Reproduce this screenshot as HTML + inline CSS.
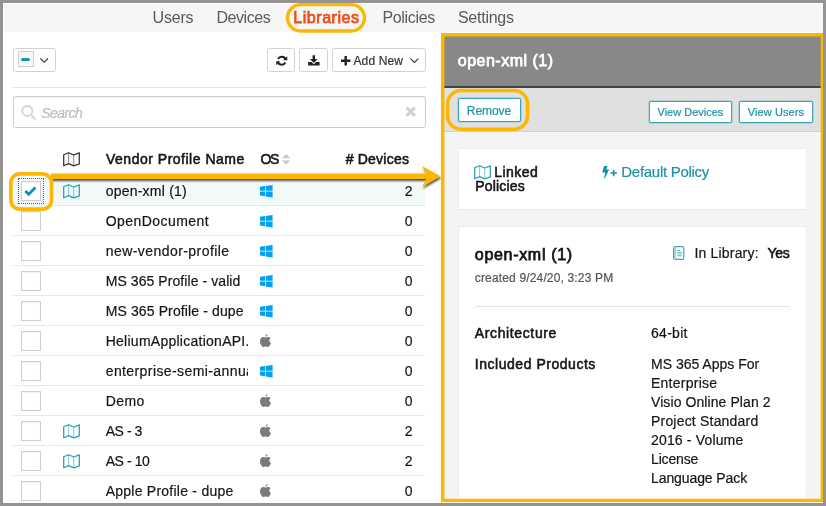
<!DOCTYPE html>
<html lang="en">
<head>
<meta charset="utf-8">
<title>Libraries</title>
<style>
html,body{margin:0;padding:0;}
body{width:826px;height:506px;position:relative;overflow:hidden;background:#959391;font-family:"Liberation Sans",sans-serif;}
.a{position:absolute;box-sizing:border-box;}
.t{position:absolute;white-space:nowrap;}
#page{left:3px;top:3px;width:820px;height:500px;background:#fff;}
#nav{left:3px;top:3px;width:820px;height:29px;background:#f6f6f6;border-top:1px solid #fff;border-left:1px solid #fff;}
.btn{background:#fff;border:1px solid #d2d2d2;border-radius:2.5px;}
.hl{border:4px solid #fbb703;border-radius:11px;}
.line{height:1px;background:#e7e7e7;left:13px;width:412px;}
.cb{left:21px;width:20px;height:20px;border:1px solid #cfcfcf;background:#fff;box-shadow:inset 0 1px 1px rgba(0,0,0,.06);}
.card{background:#fff;border:1px solid #ececec;}
.tbtn{background:#fff;border:1px solid #3aa7b6;border-radius:2px;box-shadow:0 0 0 1px rgba(58,167,182,.25);}
svg{position:absolute;overflow:visible;}
</style>
</head>
<body>
<div class="a" id="page"></div>
<div class="a" id="nav"></div>
<!-- Libraries pill -->
<svg style="left:0;top:0" width="826" height="40" viewBox="0 0 826 40"><rect x="287.5" y="4.6" width="77" height="26.4" rx="13.2" fill="#f6f6f6" stroke="#fbb703" stroke-width="3.4"/></svg>

<!-- left toolbar -->
<div class="a btn" style="left:13px;top:48px;width:43px;height:24px;"></div>
<div class="a" style="left:18px;top:51px;width:16px;height:16px;border:1px solid #d0d0d0;background:#f8f8f8;"></div>
<div class="a" style="left:20.7px;top:58px;width:9.7px;height:3px;background:#1697a9;border-radius:1.5px;"></div>
<svg style="left:40px;top:58.4px" width="8.4" height="5" viewBox="0 0 8.4 5"><path d="M0.4 0.5 L4.2 4.3 L8 0.5" fill="none" stroke="#333" stroke-width="1.1"/></svg>

<div class="a btn" style="left:267px;top:48px;width:28px;height:24px;"></div>
<svg style="left:275.5px;top:55px" width="11.5" height="11.5" viewBox="0 0 24 24"><g fill="none" stroke="#222" stroke-width="4"><path d="M20.5 9.5 A9 9 0 0 0 4.2 8.2"/><path d="M3.5 14.5 A9 9 0 0 0 19.8 15.8"/></g><path d="M23.5 2.5 V11 H15 Z" fill="#222"/><path d="M0.5 21.5 V13 H9 Z" fill="#222"/></svg>
<div class="a btn" style="left:299px;top:48px;width:29px;height:24px;"></div>
<svg style="left:307.5px;top:54.5px" width="12" height="11" viewBox="0 0 12 11"><path d="M4.6 0.2 H7 V3.9 H9.6 L5.8 8 L2 3.9 H4.6 Z" fill="#222"/><path d="M0.1 7 H3.4 L5.8 9.3 L8.2 7 H11.6 V10.5 H0.1 Z" fill="#222"/></svg>
<div class="a btn" style="left:332px;top:48px;width:94px;height:24px;"></div>
<svg style="left:340.5px;top:55.7px" width="9.4" height="9.4" viewBox="0 0 10 10"><path d="M3.7 0 H6.3 V3.7 H10 V6.3 H6.3 V10 H3.7 V6.3 H0 V3.7 H3.7 Z" fill="#222"/></svg>
<svg style="left:409.8px;top:58.3px" width="9" height="6" viewBox="0 0 9 6"><path d="M0.5 0.6 L4.4 4.5 L8.3 0.6" fill="none" stroke="#333" stroke-width="1.1"/></svg>

<div class="a" style="left:13px;top:87px;width:413px;height:1px;background:#e2e2e2;"></div>
<!-- search -->
<div class="a" style="left:13px;top:96px;width:413px;height:32px;border:1px solid #ccc;border-radius:2.5px;background:#fff;box-shadow:inset 0 1px 1px rgba(0,0,0,.05);"></div>
<svg style="left:20px;top:103.5px" width="17" height="17" viewBox="0 0 17 17"><circle cx="7.3" cy="7.1" r="5.1" fill="none" stroke="#d6d6d6" stroke-width="1.8"/><path d="M11 10.9 L15 15" stroke="#d6d6d6" stroke-width="2" stroke-linecap="round"/></svg>
<svg style="left:405.3px;top:106.3px" width="11.4" height="11.4" viewBox="0 0 11 11"><path d="M1.5 1.5 L9.5 9.5 M9.5 1.5 L1.5 9.5" stroke="#d2d2d2" stroke-width="3" stroke-linecap="butt"/></svg>

<!-- table header icons -->
<svg style="left:63px;top:151.5px" width="17" height="14.5" viewBox="0 0 17 14.5"><path d="M0.7 2.8 L5.6 0.7 L10.7 3 L16.3 0.8 V11.9 L10.7 13.9 L5.6 11.6 L0.7 13.8 Z" fill="none" stroke="#333" stroke-width="1.25" stroke-linejoin="round"/><path d="M5.6 0.7 V11.6 M10.7 3 V13.9" stroke="#333" stroke-width="0.75" opacity="0.75"/></svg>
<svg style="left:281.8px;top:153.8px" width="8.4" height="10.6" viewBox="0 0 8.4 10.6"><path d="M4.2 0 L8.4 4.2 H0 Z M0 6.4 H8.4 L4.2 10.6 Z" fill="#c8c8c8"/></svg>

<!-- rows -->
<div class="a" style="left:13px;top:175px;width:412px;height:30px;background:#f2f9f9;"></div>
<div class="a line" style="top:205px"></div>
<svg style="left:63px;top:183.8px" width="17" height="14.5" viewBox="0 0 17 14.5"><path d="M0.7 2.8 L5.6 0.7 L10.7 3 L16.3 0.8 V11.9 L10.7 13.9 L5.6 11.6 L0.7 13.8 Z" fill="none" stroke="#2a9fb0" stroke-width="1.25" stroke-linejoin="round"/><path d="M5.6 0.7 V11.6 M10.7 3 V13.9" stroke="#2a9fb0" stroke-width="0.75" opacity="0.75"/></svg>
<svg style="left:259.8px;top:184.6px" width="12.6" height="12.4" viewBox="0 0 13 13" preserveAspectRatio="none"><path d="M0 1.8 L5.3 1.05 V6.1 H0 Z M5.95 0.95 L13 0 V6.1 H5.95 Z M0 6.75 H5.3 V11.85 L0 11.1 Z M5.95 6.75 H13 V13 L5.95 12 Z" fill="#00a1f1"/></svg>
<div class="a line" style="top:235px"></div>
<div class="a cb" style="top:211px"></div>
<svg style="left:259.8px;top:214.6px" width="12.6" height="12.4" viewBox="0 0 13 13" preserveAspectRatio="none"><path d="M0 1.8 L5.3 1.05 V6.1 H0 Z M5.95 0.95 L13 0 V6.1 H5.95 Z M0 6.75 H5.3 V11.85 L0 11.1 Z M5.95 6.75 H13 V13 L5.95 12 Z" fill="#00a1f1"/></svg>
<div class="a line" style="top:265px"></div>
<div class="a cb" style="top:241px"></div>
<svg style="left:259.8px;top:244.6px" width="12.6" height="12.4" viewBox="0 0 13 13" preserveAspectRatio="none"><path d="M0 1.8 L5.3 1.05 V6.1 H0 Z M5.95 0.95 L13 0 V6.1 H5.95 Z M0 6.75 H5.3 V11.85 L0 11.1 Z M5.95 6.75 H13 V13 L5.95 12 Z" fill="#00a1f1"/></svg>
<div class="a line" style="top:295px"></div>
<div class="a cb" style="top:271px"></div>
<svg style="left:259.8px;top:274.6px" width="12.6" height="12.4" viewBox="0 0 13 13" preserveAspectRatio="none"><path d="M0 1.8 L5.3 1.05 V6.1 H0 Z M5.95 0.95 L13 0 V6.1 H5.95 Z M0 6.75 H5.3 V11.85 L0 11.1 Z M5.95 6.75 H13 V13 L5.95 12 Z" fill="#00a1f1"/></svg>
<div class="a line" style="top:325px"></div>
<div class="a cb" style="top:301px"></div>
<svg style="left:259.8px;top:304.6px" width="12.6" height="12.4" viewBox="0 0 13 13" preserveAspectRatio="none"><path d="M0 1.8 L5.3 1.05 V6.1 H0 Z M5.95 0.95 L13 0 V6.1 H5.95 Z M0 6.75 H5.3 V11.85 L0 11.1 Z M5.95 6.75 H13 V13 L5.95 12 Z" fill="#00a1f1"/></svg>
<div class="a line" style="top:355px"></div>
<div class="a cb" style="top:331px"></div>
<svg style="left:260.1px;top:334px" width="11" height="13" viewBox="0 0 11 13"><path d="M7.6 0 C7.7 0.9 7.1 2 5.6 2.9 C5.4 1.6 6.4 0.4 7.6 0 Z M5.6 3.6 C6.3 3.6 7 3 8.1 3 C9.1 3 10 3.5 10.6 4.3 C8.7 5.4 9 8.2 11 9 C10.5 10.4 9.3 13 7.9 13 C7 13 6.6 12.5 5.6 12.5 C4.6 12.5 4.2 13 3.4 13 C1.9 13 0 9.9 0 7.3 C0 4.6 1.7 3.1 3.3 3.1 C4.3 3.1 5 3.6 5.6 3.6 Z" fill="#7b7b7b"/></svg>
<div class="a line" style="top:385px"></div>
<div class="a cb" style="top:361px"></div>
<svg style="left:259.8px;top:364.6px" width="12.6" height="12.4" viewBox="0 0 13 13" preserveAspectRatio="none"><path d="M0 1.8 L5.3 1.05 V6.1 H0 Z M5.95 0.95 L13 0 V6.1 H5.95 Z M0 6.75 H5.3 V11.85 L0 11.1 Z M5.95 6.75 H13 V13 L5.95 12 Z" fill="#00a1f1"/></svg>
<div class="a line" style="top:415px"></div>
<div class="a cb" style="top:391px"></div>
<svg style="left:260.1px;top:394px" width="11" height="13" viewBox="0 0 11 13"><path d="M7.6 0 C7.7 0.9 7.1 2 5.6 2.9 C5.4 1.6 6.4 0.4 7.6 0 Z M5.6 3.6 C6.3 3.6 7 3 8.1 3 C9.1 3 10 3.5 10.6 4.3 C8.7 5.4 9 8.2 11 9 C10.5 10.4 9.3 13 7.9 13 C7 13 6.6 12.5 5.6 12.5 C4.6 12.5 4.2 13 3.4 13 C1.9 13 0 9.9 0 7.3 C0 4.6 1.7 3.1 3.3 3.1 C4.3 3.1 5 3.6 5.6 3.6 Z" fill="#7b7b7b"/></svg>
<div class="a line" style="top:445px"></div>
<div class="a cb" style="top:421px"></div>
<svg style="left:63px;top:423.8px" width="17" height="14.5" viewBox="0 0 17 14.5"><path d="M0.7 2.8 L5.6 0.7 L10.7 3 L16.3 0.8 V11.9 L10.7 13.9 L5.6 11.6 L0.7 13.8 Z" fill="none" stroke="#2a9fb0" stroke-width="1.25" stroke-linejoin="round"/><path d="M5.6 0.7 V11.6 M10.7 3 V13.9" stroke="#2a9fb0" stroke-width="0.75" opacity="0.75"/></svg>
<svg style="left:260.1px;top:424px" width="11" height="13" viewBox="0 0 11 13"><path d="M7.6 0 C7.7 0.9 7.1 2 5.6 2.9 C5.4 1.6 6.4 0.4 7.6 0 Z M5.6 3.6 C6.3 3.6 7 3 8.1 3 C9.1 3 10 3.5 10.6 4.3 C8.7 5.4 9 8.2 11 9 C10.5 10.4 9.3 13 7.9 13 C7 13 6.6 12.5 5.6 12.5 C4.6 12.5 4.2 13 3.4 13 C1.9 13 0 9.9 0 7.3 C0 4.6 1.7 3.1 3.3 3.1 C4.3 3.1 5 3.6 5.6 3.6 Z" fill="#7b7b7b"/></svg>
<div class="a line" style="top:475px"></div>
<div class="a cb" style="top:451px"></div>
<svg style="left:63px;top:453.8px" width="17" height="14.5" viewBox="0 0 17 14.5"><path d="M0.7 2.8 L5.6 0.7 L10.7 3 L16.3 0.8 V11.9 L10.7 13.9 L5.6 11.6 L0.7 13.8 Z" fill="none" stroke="#2a9fb0" stroke-width="1.25" stroke-linejoin="round"/><path d="M5.6 0.7 V11.6 M10.7 3 V13.9" stroke="#2a9fb0" stroke-width="0.75" opacity="0.75"/></svg>
<svg style="left:260.1px;top:454px" width="11" height="13" viewBox="0 0 11 13"><path d="M7.6 0 C7.7 0.9 7.1 2 5.6 2.9 C5.4 1.6 6.4 0.4 7.6 0 Z M5.6 3.6 C6.3 3.6 7 3 8.1 3 C9.1 3 10 3.5 10.6 4.3 C8.7 5.4 9 8.2 11 9 C10.5 10.4 9.3 13 7.9 13 C7 13 6.6 12.5 5.6 12.5 C4.6 12.5 4.2 13 3.4 13 C1.9 13 0 9.9 0 7.3 C0 4.6 1.7 3.1 3.3 3.1 C4.3 3.1 5 3.6 5.6 3.6 Z" fill="#7b7b7b"/></svg>
<div class="a line" style="top:505px"></div>
<div class="a cb" style="top:481px"></div>
<svg style="left:260.1px;top:484px" width="11" height="13" viewBox="0 0 11 13"><path d="M7.6 0 C7.7 0.9 7.1 2 5.6 2.9 C5.4 1.6 6.4 0.4 7.6 0 Z M5.6 3.6 C6.3 3.6 7 3 8.1 3 C9.1 3 10 3.5 10.6 4.3 C8.7 5.4 9 8.2 11 9 C10.5 10.4 9.3 13 7.9 13 C7 13 6.6 12.5 5.6 12.5 C4.6 12.5 4.2 13 3.4 13 C1.9 13 0 9.9 0 7.3 C0 4.6 1.7 3.1 3.3 3.1 C4.3 3.1 5 3.6 5.6 3.6 Z" fill="#7b7b7b"/></svg>

<!-- highlight on checkbox + arrow -->
<svg style="left:0;top:0" width="826" height="506" viewBox="0 0 826 506">
 <defs><filter id="sh" x="-5%" y="-50%" width="110%" height="200%"><feDropShadow dx="0.8" dy="1.9" stdDeviation="0.9" flood-color="#000" flood-opacity="0.72"/></filter></defs>
 <g filter="url(#sh)"><path d="M51 173.6 H426.6 L421.9 166.1 L440.4 176.3 L421.9 187.1 L426.6 179 H51 Z" fill="#fbb703"/></g>
</svg>
<svg style="left:0;top:160px" width="70" height="60" viewBox="0 160 70 60"><rect x="10.85" y="173.85" width="40.7" height="35.3" rx="9" fill="#f2f9f9" stroke="#fbb703" stroke-width="3.7"/></svg>
<div class="a" style="left:18px;top:178px;width:26px;height:26px;border:1px dotted #666;"></div>
<div class="a cb" style="top:181px;"></div>
<svg style="left:24.1px;top:186.3px" width="12.5" height="10" viewBox="0 0 12.5 10"><path d="M1.3 5 L4.7 8.3 L11.4 1.5" fill="none" stroke="#0e94a7" stroke-width="2.8"/></svg>

<!-- right panel -->
<div class="a" style="left:441px;top:33px;width:382px;height:469px;background:#f4f4f4;"></div>
<div class="a" style="left:444px;top:36px;width:377px;height:51.5px;background:#888;border-bottom:2px solid #444;"></div>
<div class="a" style="left:444px;top:87.5px;width:377px;height:44px;background:#e0e0e0;border-bottom:1px solid #d0d0d0;"></div>
<div class="a tbtn" style="left:458px;top:98px;width:63px;height:24px;"></div>
<div class="a tbtn" style="left:648.5px;top:101px;width:83.5px;height:21.5px;"></div>
<div class="a tbtn" style="left:739px;top:101px;width:73.5px;height:21.5px;"></div>
<svg style="left:440px;top:80px" width="100" height="60" viewBox="440 80 100 60"><rect x="447.6" y="90.5" width="80" height="38.7" rx="13.5" fill="none" stroke="#fbb703" stroke-width="3.6"/></svg>

<div class="a card" style="left:458px;top:148px;width:348.5px;height:61.5px;"></div>
<div class="a card" style="left:458px;top:226px;width:348.5px;height:290px;"></div>
<svg style="left:474px;top:165.1px" width="17" height="14.5" viewBox="0 0 17 14.5"><path d="M0.7 2.8 L5.6 0.7 L10.7 3 L16.3 0.8 V11.9 L10.7 13.9 L5.6 11.6 L0.7 13.8 Z" fill="none" stroke="#2a9fb0" stroke-width="1.25" stroke-linejoin="round"/><path d="M5.6 0.7 V11.6 M10.7 3 V13.9" stroke="#2a9fb0" stroke-width="0.75" opacity="0.75"/></svg>
<svg style="left:602px;top:166px" width="15.2" height="12.8" viewBox="0 0 15.2 12.8"><path d="M2 0 H5.4 L4.5 3.4 H7.2 L2.6 12.8 H2 L3.3 6.6 H0.2 Z" fill="#0e94a7"/><path d="M10.9 3.8 H12.5 V6.2 H14.9 V7.8 H12.5 V10.2 H10.9 V7.8 H8.5 V6.2 H10.9 Z" fill="#0e94a7"/></svg>
<!-- book icon -->
<svg style="left:673px;top:246px" width="11.4" height="14" viewBox="0 0 11.4 14"><rect x="0.6" y="0.6" width="10.2" height="12.8" rx="1.6" fill="#fff" stroke="#3aaab9" stroke-width="1.2"/><rect x="1" y="1" width="2.2" height="12" fill="#9fd5dc"/><path d="M4.4 4.4 H7 M4.4 6.3 H8.8 M4.4 8 H8.8 M4.4 9.8 H8.8" stroke="#55b7c4" stroke-width="1"/></svg>
<div class="a" style="left:475px;top:306px;width:315px;height:1px;background:#e3e3e3;"></div>

<!-- orange frame -->
<svg style="left:0;top:0" width="826" height="506" viewBox="0 0 826 506"><path fill-rule="evenodd" fill="#fbb703" d="M440.9 33 H823.2 V502 H440.9 Z M444.4 36.4 V498.7 H820.7 V36.4 Z"/></svg>
<div class="a" style="left:441px;top:502px;width:382px;height:1px;background:#fff8e0;"></div>
<!-- outer frame repaint -->
<div class="a" style="left:0;top:503px;width:826px;height:3px;background:#959391;"></div>
<div class="a" style="left:823px;top:0;width:3px;height:506px;background:#959391;"></div>

<div class="a" style="left:0;top:0;width:826px;height:506px;will-change:transform;">
<span class="t" style="top:9px;font-size:16px;line-height:17px;color:#5a5a5a;left:152.60px;letter-spacing:-0.216px;">Users</span>
<span class="t" style="top:9px;font-size:16px;line-height:17px;color:#5a5a5a;left:216.50px;letter-spacing:-0.444px;">Devices</span>
<span class="t" style="top:9px;font-size:16px;line-height:17px;color:#f24e1a;left:293.30px;-webkit-text-stroke:0.75px;letter-spacing:0.538px;">Libraries</span>
<span class="t" style="top:9px;font-size:16px;line-height:17px;color:#5a5a5a;left:382.40px;letter-spacing:-0.318px;">Policies</span>
<span class="t" style="top:9px;font-size:16px;line-height:17px;color:#5a5a5a;left:457.90px;letter-spacing:-0.239px;">Settings</span>
<span class="t" style="top:54px;font-size:12px;line-height:14px;color:#333;left:353.40px;-webkit-text-stroke:0.2px;letter-spacing:0.157px;">Add New</span>
<span class="t" style="top:105px;font-size:14px;line-height:16px;color:#bdbdbd;left:41.30px;-webkit-text-stroke:0.2px;font-style:italic;letter-spacing:-0.577px;">Search</span>
<span class="t" style="top:151px;font-size:14px;line-height:16px;color:#151515;left:106.00px;-webkit-text-stroke:0.55px;letter-spacing:0.506px;">Vendor Profile Name</span>
<span class="t" style="top:151px;font-size:14px;line-height:16px;color:#151515;left:260.50px;-webkit-text-stroke:0.55px;letter-spacing:-1.467px;">OS</span>
<span class="t" style="top:151px;font-size:14px;line-height:16px;color:#151515;left:345.70px;-webkit-text-stroke:0.55px;letter-spacing:0.215px;"># Devices</span>
<span class="t" style="top:183px;font-size:14px;line-height:16px;color:#151515;left:105.70px;-webkit-text-stroke:0.2px;letter-spacing:0.226px;">open-xml (1)</span>
<span class="t" style="top:183px;font-size:14px;line-height:16px;color:#151515;right:413.50px;-webkit-text-stroke:0.2px;">2</span>
<span class="t" style="top:213px;font-size:14px;line-height:16px;color:#151515;left:105.70px;-webkit-text-stroke:0.2px;letter-spacing:0.445px;">OpenDocument</span>
<span class="t" style="top:213px;font-size:14px;line-height:16px;color:#151515;right:413.50px;-webkit-text-stroke:0.2px;">0</span>
<span class="t" style="top:243px;font-size:14px;line-height:16px;color:#151515;left:105.70px;-webkit-text-stroke:0.2px;letter-spacing:0.441px;">new-vendor-profile</span>
<span class="t" style="top:243px;font-size:14px;line-height:16px;color:#151515;right:413.50px;-webkit-text-stroke:0.2px;">0</span>
<span class="t" style="top:273px;font-size:14px;line-height:16px;color:#151515;left:105.70px;-webkit-text-stroke:0.2px;letter-spacing:0.074px;">MS 365 Profile - valid</span>
<span class="t" style="top:273px;font-size:14px;line-height:16px;color:#151515;right:413.50px;-webkit-text-stroke:0.2px;">0</span>
<span class="t" style="top:303px;font-size:14px;line-height:16px;color:#151515;left:105.70px;-webkit-text-stroke:0.2px;letter-spacing:0.119px;">MS 365 Profile - dupe</span>
<span class="t" style="top:303px;font-size:14px;line-height:16px;color:#151515;right:413.50px;-webkit-text-stroke:0.2px;">0</span>
<span class="t" style="top:333px;font-size:14px;line-height:16px;color:#151515;left:105.70px;-webkit-text-stroke:0.2px;letter-spacing:0.259px;width:142.6px;overflow:hidden;">HeliumApplicationAPI.</span>
<span class="t" style="top:333px;font-size:14px;line-height:16px;color:#151515;right:413.50px;-webkit-text-stroke:0.2px;">0</span>
<span class="t" style="top:363px;font-size:14px;line-height:16px;color:#151515;left:105.70px;-webkit-text-stroke:0.2px;letter-spacing:0.405px;width:142.6px;overflow:hidden;">enterprise-semi-annua</span>
<span class="t" style="top:363px;font-size:14px;line-height:16px;color:#151515;right:413.50px;-webkit-text-stroke:0.2px;">0</span>
<span class="t" style="top:393px;font-size:14px;line-height:16px;color:#151515;left:105.70px;-webkit-text-stroke:0.2px;letter-spacing:0.410px;">Demo</span>
<span class="t" style="top:393px;font-size:14px;line-height:16px;color:#151515;right:413.50px;-webkit-text-stroke:0.2px;">0</span>
<span class="t" style="top:423px;font-size:14px;line-height:16px;color:#151515;left:105.70px;-webkit-text-stroke:0.2px;letter-spacing:-0.451px;">AS - 3</span>
<span class="t" style="top:423px;font-size:14px;line-height:16px;color:#151515;right:413.50px;-webkit-text-stroke:0.2px;">2</span>
<span class="t" style="top:453px;font-size:14px;line-height:16px;color:#151515;left:105.70px;-webkit-text-stroke:0.2px;letter-spacing:-0.429px;">AS - 10</span>
<span class="t" style="top:453px;font-size:14px;line-height:16px;color:#151515;right:413.50px;-webkit-text-stroke:0.2px;">2</span>
<span class="t" style="top:483px;font-size:14px;line-height:16px;color:#151515;left:105.70px;-webkit-text-stroke:0.2px;letter-spacing:0.242px;">Apple Profile - dupe</span>
<span class="t" style="top:483px;font-size:14px;line-height:16px;color:#151515;right:413.50px;-webkit-text-stroke:0.2px;">0</span>
<span class="t" style="top:52px;font-size:16px;line-height:17px;color:#fff;left:457.80px;-webkit-text-stroke:0.75px;letter-spacing:0.491px;">open-xml (1)</span>
<span class="t" style="top:104px;font-size:12px;line-height:14px;color:#1b93a6;left:466.80px;-webkit-text-stroke:0.2px;letter-spacing:-0.081px;">Remove</span>
<span class="t" style="top:106px;font-size:11px;line-height:12px;color:#1b93a6;left:657.50px;-webkit-text-stroke:0.2px;">View Devices</span>
<span class="t" style="top:106px;font-size:11px;line-height:12px;color:#1b93a6;left:747.80px;-webkit-text-stroke:0.2px;letter-spacing:0.076px;">View Users</span>
<span class="t" style="top:164px;font-size:14px;line-height:16px;color:#151515;left:494.20px;-webkit-text-stroke:0.55px;letter-spacing:0.456px;">Linked</span>
<span class="t" style="top:178px;font-size:14px;line-height:16px;color:#151515;left:475.30px;-webkit-text-stroke:0.55px;letter-spacing:0.181px;">Policies</span>
<span class="t" style="top:163px;font-size:15px;line-height:17px;color:#1b93a6;left:621.30px;-webkit-text-stroke:0.2px;letter-spacing:-0.287px;">Default Policy</span>
<span class="t" style="top:246px;font-size:16px;line-height:17px;color:#151515;left:474.80px;-webkit-text-stroke:0.75px;letter-spacing:0.691px;">open-xml (1)</span>
<span class="t" style="top:271px;font-size:12px;line-height:14px;color:#555;left:474.80px;-webkit-text-stroke:0.2px;letter-spacing:0.156px;">created 9/24/20, 3:23 PM</span>
<span class="t" style="top:245px;font-size:14px;line-height:16px;color:#151515;left:694.50px;-webkit-text-stroke:0.2px;letter-spacing:0.177px;">In Library:</span>
<span class="t" style="top:245px;font-size:14px;line-height:16px;color:#151515;left:767.60px;-webkit-text-stroke:0.55px;letter-spacing:-0.348px;">Yes</span>
<span class="t" style="top:325px;font-size:14px;line-height:16px;color:#151515;left:474.80px;-webkit-text-stroke:0.55px;letter-spacing:0.625px;">Architecture</span>
<span class="t" style="top:356px;font-size:14px;line-height:16px;color:#151515;left:474.80px;-webkit-text-stroke:0.55px;letter-spacing:0.531px;">Included Products</span>
<span class="t" style="top:325px;font-size:14px;line-height:16px;color:#151515;left:651.00px;-webkit-text-stroke:0.2px;letter-spacing:0.278px;">64-bit</span>
<span class="t" style="top:356px;font-size:14px;line-height:16px;color:#151515;left:651.00px;-webkit-text-stroke:0.2px;">MS 365 Apps For</span>
<span class="t" style="top:375px;font-size:14px;line-height:16px;color:#151515;left:651.00px;-webkit-text-stroke:0.2px;letter-spacing:0.249px;">Enterprise</span>
<span class="t" style="top:394px;font-size:14px;line-height:16px;color:#151515;left:651.00px;-webkit-text-stroke:0.2px;letter-spacing:0.082px;">Visio Online Plan 2</span>
<span class="t" style="top:413px;font-size:14px;line-height:16px;color:#151515;left:651.00px;-webkit-text-stroke:0.2px;letter-spacing:0.194px;">Project Standard</span>
<span class="t" style="top:432px;font-size:14px;line-height:16px;color:#151515;left:651.00px;-webkit-text-stroke:0.2px;letter-spacing:0.162px;">2016 - Volume</span>
<span class="t" style="top:451px;font-size:14px;line-height:16px;color:#151515;left:651.00px;-webkit-text-stroke:0.2px;letter-spacing:-0.152px;">License</span>
<span class="t" style="top:470px;font-size:14px;line-height:16px;color:#151515;left:651.00px;-webkit-text-stroke:0.2px;letter-spacing:-0.093px;">Language Pack</span>
</div>
</body>
</html>
